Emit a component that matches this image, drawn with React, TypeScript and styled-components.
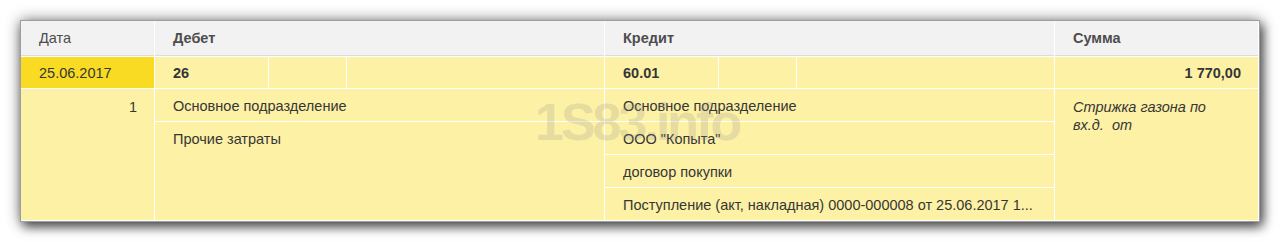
import React, { FC } from 'react'
import styled, { createGlobalStyle } from 'styled-components'

const GlobalStyle = createGlobalStyle`
  body {
    margin: 0;
    background: #fff;
    font-family: "Liberation Sans", Arial, sans-serif;
  }
`

const Page = styled.div`
  padding: 20px;
`

const Panel = styled.div`
  position: relative;
  width: 1240px;
  box-sizing: border-box;
  border: 1px solid #9e9e9e;
  background: #fff;
  box-shadow: 0 0 14px rgba(0, 0, 0, 0.45), 3px 5px 10px rgba(0, 0, 0, 0.6);
`

const Grid = styled.div`
  display: grid;
  grid-template-columns: 133px 449px 449px 203px;
  grid-template-rows: 35px 31px 131px;
  gap: 1px;
  padding: 0 1px 1px 0;
  background: #fff;
  color: #363636;
  font-size: 14.5px;
`

const HeadCell = styled.div<{ bold?: boolean }>`
  display: flex;
  align-items: center;
  padding: 0 18px;
  background: #f2f2f2;
  border-bottom: 1px solid #dcdcdc;
  color: #4d4d4d;
  font-weight: ${({ bold }) => (bold ? 'bold' : 'normal')};
`

const Cell = styled.div<{ active?: boolean; bold?: boolean; right?: boolean }>`
  display: flex;
  align-items: center;
  justify-content: ${({ right }) => (right ? 'flex-end' : 'flex-start')};
  padding: 1px 17px 0 18px;
  background: ${({ active }) => (active ? '#fadb24' : '#fdf1a5')};
  font-weight: ${({ bold }) => (bold ? 'bold' : 'normal')};
  white-space: nowrap;
`

const Split = styled.div`
  display: grid;
  grid-template-columns: 113px 77px 1fr;
  gap: 1px;
  background: #fff;
`

const Part = styled.div<{ bold?: boolean }>`
  display: flex;
  align-items: center;
  padding: 1px 18px 0;
  background: #fdf1a5;
  font-weight: ${({ bold }) => (bold ? 'bold' : 'normal')};
`

const Block = styled.div<{ right?: boolean; italic?: boolean }>`
  padding: 9px 17px 0 18px;
  background: #fdf1a5;
  text-align: ${({ right }) => (right ? 'right' : 'left')};
  font-style: ${({ italic }) => (italic ? 'italic' : 'normal')};
  line-height: 18px;
`

const SubList = styled.div`
  display: flex;
  flex-direction: column;
  background: #fdf1a5;
`

const SubRow = styled.div`
  display: flex;
  align-items: center;
  height: 32px;
  padding: 2px 18px 0;
  box-sizing: border-box;
  white-space: nowrap;

  & + & {
    border-top: 1px solid #fff;
    height: 33px;
  }
`

// водяной знак поверх таблицы
const Watermark = styled.div`
  position: absolute;
  left: 514px;
  top: 75px;
  font-size: 52px;
  line-height: 1;
  font-weight: bold;
  letter-spacing: -3px;
  color: rgba(140, 140, 140, 0.2);
  pointer-events: none;
`

const debet = ['Основное подразделение', 'Прочие затраты']
const kredit = [
  'Основное подразделение',
  'ООО "Копыта"',
  'договор покупки',
  'Поступление (акт, накладная) 0000-000008 от 25.06.2017 1...',
]

const App: FC = () => (
  <>
    <GlobalStyle />
    <Page>
      <Panel>
        <Grid>
          <HeadCell>Дата</HeadCell>
          <HeadCell bold>Дебет</HeadCell>
          <HeadCell bold>Кредит</HeadCell>
          <HeadCell bold>Сумма</HeadCell>

          <Cell active>25.06.2017</Cell>
          <Split>
            <Part bold>26</Part>
            <Part />
            <Part />
          </Split>
          <Split>
            <Part bold>60.01</Part>
            <Part />
            <Part />
          </Split>
          <Cell bold right>
            1 770,00
          </Cell>

          <Block right>1</Block>
          <SubList>
            {debet.map((t) => (
              <SubRow key={t}>{t}</SubRow>
            ))}
          </SubList>
          <SubList>
            {kredit.map((t) => (
              <SubRow key={t}>{t}</SubRow>
            ))}
          </SubList>
          <Block italic>
            Стрижка газона по
            <br />
            {'вх.д.\u00a0 от'}
          </Block>
        </Grid>
        <Watermark>1S83.info</Watermark>
      </Panel>
    </Page>
  </>
)

export default App
